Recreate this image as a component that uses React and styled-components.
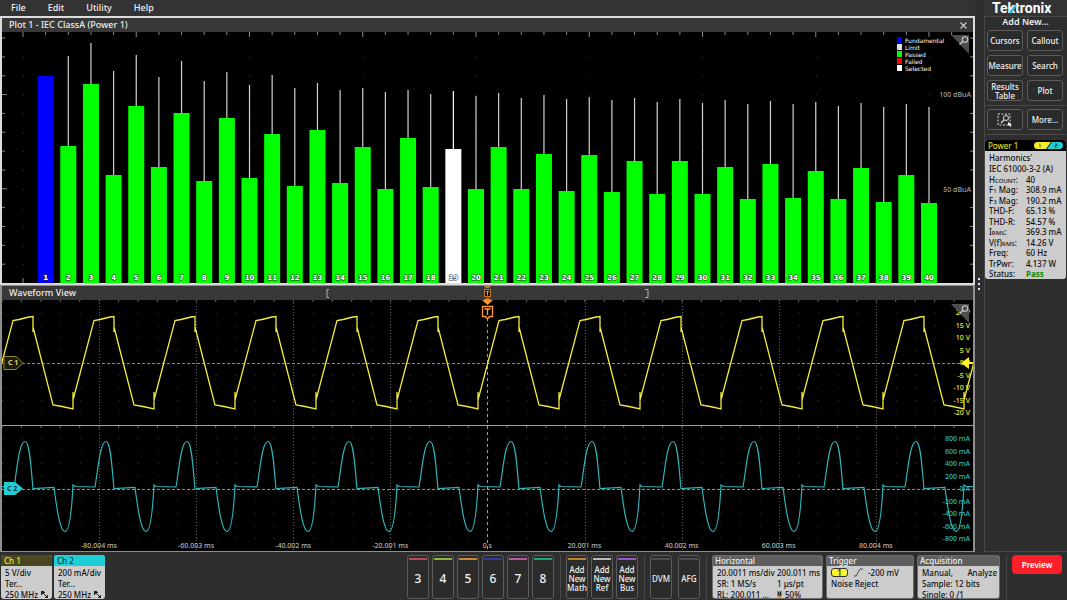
import styled, { createGlobalStyle } from 'styled-components';

const GlobalStyle = createGlobalStyle`
  * {
    box-sizing: border-box;
  }
  body {
    margin: 0;
    background: #2e2e2e;
    color: #eeeeee;
    font-family: 'Noto Sans', 'Open Sans', sans-serif;
    font-size: 9px;
  }
  button {
    font-family: inherit;
    padding: 0;
    cursor: pointer;
  }
`;

const Screen = styled.div`
  display: grid;
  grid-template-columns: minmax(0, 1fr) 92px;
  min-height: 100vh;
  grid-template-rows: 1fr auto;
`;

const Workspace = styled.main`
  display: flex;
  flex-direction: column;
  min-width: 0;
`;

const MenuBar = styled.nav`
  display: flex;
  height: 16px;
  padding-left: 5px;
  background: #333333;
`;

const MenuButton = styled.button`
  border: none;
  background: none;
  color: #f2f2f2;
  font-size: 9px;
  font-weight: 500;
  line-height: 16px;
  padding: 0 6px;
  margin-right: 10px;
`;

const View = styled.section`
  border-style: solid;
  border-width: ${(p) => (p.$active ? '2px' : '1px 2px')};
  border-color: ${(p) => (p.$active ? '#dcdcdc' : '#8f8f8f')};
  background: #000000;
`;

const ViewHeader = styled.header`
  display: flex;
  position: relative;
  justify-content: space-between;
  align-items: center;
  height: 14px;
  padding: 0 5px 0 7px;
  background: #383838;
`;

const ViewTitle = styled.h2`
  margin: 0;
  font-size: 9px;
  font-weight: 500;
  line-height: 14px;
`;

const CloseButton = styled.button`
  display: flex;
  border: none;
  background: none;
  color: #d0d0d0;
`;

const RangeMarks = styled.svg`
  position: absolute;
  left: 0;
  top: 0;
  width: 100%;
  height: 14px;
  overflow: visible;
`;

const Chart = styled.svg`
  display: block;
  width: 100%;
  height: auto;
`;

const ChartText = styled.text`
  font-family: 'Noto Sans', sans-serif;
  font-size: 7px;
  font-weight: ${(p) => (p.$strong ? 700 : 500)};
  fill: ${(p) => p.$color || '#b8b8b8'};
`;

const BarLabel = styled.text`
  font-family: 'DejaVu Sans', sans-serif;
  font-size: 7px;
  font-weight: 700;
  fill: #ffffff;
  text-anchor: middle;
  paint-order: stroke;
  stroke: #333333;
  stroke-width: 1px;
`;

const LegendText = styled.text`
  font-family: 'DejaVu Sans', sans-serif;
  font-size: 6px;
  fill: #ffffff;
`;

const SideBar = styled.aside`
  display: flex;
  min-width: 0;
`;

const Grip = styled.div`
  display: flex;
  flex-direction: column;
  width: 9px;
  padding: 278px 0 0 3px;
  gap: 3px;
`;

const GripDot = styled.span`
  width: 2px;
  height: 2px;
  background: #e8e8e8;
`;

const SideContent = styled.div`
  display: flex;
  flex-direction: column;
  flex: 1;
  min-width: 0;
`;

const Logo = styled.div`
  height: 16px;
  padding-left: 8px;
  background: #333333;
`;

const LogoDrawing = styled.svg`
  display: block;
`;

const LogoText = styled.text`
  font-family: Roboto, sans-serif;
  font-size: 14px;
  font-weight: 700;
  fill: #ffffff;
`;

const SidePanel = styled.div`
  flex: 1;
  border: 1px solid #484848;
  border-right: none;
  padding-right: 1px;
`;

const SideTitle = styled.h2`
  margin: 0;
  font-size: 9px;
  font-weight: 600;
  line-height: 9px;
  text-align: center;
`;

const ButtonGrid = styled.div`
  display: grid;
  grid-template-columns: 1fr 1fr;
  gap: 4px;
  padding: ${(p) => (p.$tools ? '3px 3px 4px 2px' : '4px 3px 4px 2px')};
  border-bottom: 1px solid #484848;
`;

const SideButton = styled.button`
  display: flex;
  align-items: center;
  justify-content: center;
  height: 21px;
  border: 1px solid #5c5c5c;
  border-radius: 3px;
  background: #2b2b2b;
  color: #f2f2f2;
  font-size: 8px;
  font-weight: 500;
  line-height: 9px;
`;

const Badge = styled.article`
  margin-top: 5px;
  border-radius: 3px;
  overflow: hidden;
  background: #cccccc;
  color: #111111;
`;

const BadgeHeader = styled.header`
  display: flex;
  align-items: center;
  justify-content: space-between;
  height: 11px;
  padding: 0 3px;
  background: #000000;
  color: #f5ee2b;
  font-size: 8px;
`;

const BadgeBody = styled.div`
  display: flex;
  flex-direction: column;
  height: 128px;
  padding: 2px 0 0 4px;
  font-size: 8px;
  font-weight: 500;
  line-height: 10px;
`;

const BadgeLine = styled.p`
  margin: 0 0 1px;
  white-space: nowrap;
`;

const Results = styled.dl`
  display: grid;
  flex: 1;
  align-content: space-between;
  grid-template-columns: 37px 1fr;
  grid-auto-rows: 10px;
  margin: 0;
  white-space: nowrap;
`;

const ResultName = styled.dt`
  margin: 0;
`;

const ResultValue = styled.dd`
  margin: 0;
  ${(p) => p.$pass && 'color: #0c850c; font-weight: 700;'}
`;

const Small = styled.small`
  font-size: 6px;
  line-height: 6px;
`;

const Settings = styled.footer`
  display: flex;
  grid-column: 1 / -1;
  align-items: flex-start;
  height: 48px;
  padding: 3px 5px 0 1px;
  gap: 2px;
`;

const ChannelBadge = styled.article`
  width: 51px;
  height: 44px;
  border-radius: 3px;
  overflow: hidden;
  background: #cccccc;
  color: #111111;
`;

const ChannelHeader = styled.h3`
  margin: 0;
  height: 11px;
  padding-left: 3px;
  background: ${(p) => p.$background};
  color: ${(p) => p.$color};
  font-size: 8px;
  font-weight: 500;
  line-height: 11px;
`;

const SettingLines = styled.div`
  padding: 1px 2px 0 4px;
  font-size: 8px;
  font-weight: 500;
  line-height: 11px;
  white-space: nowrap;
`;

const SettingRow = styled.div`
  display: flex;
  align-items: center;
  height: 11px;
  gap: 3px;
  justify-content: ${(p) => (p.$spread ? 'space-between' : 'flex-start')};
`;

const SettingCell = styled.span`
  width: 57px;
`;

const Spacer = styled.div`
  flex: 1;
`;

const KeyGroup = styled.div`
  display: flex;
  gap: ${(p) => (p.$wide ? '6px' : '3px')};
  padding-right: 6px;
  margin-right: 3px;
  border-right: 1px solid #484848;
`;

const KeyButton = styled.button`
  width: 22px;
  height: 44px;
  border: 1px solid #5c5c5c;
  border-radius: 3px;
  background: #2b2b2b;
  color: #f2f2f2;
  font-size: ${(p) => (p.$large ? '12px' : '8px')};
  font-weight: 500;
  line-height: 9px;
  white-space: nowrap;
  display: flex;
  flex-direction: column;
  align-items: center;
`;

const KeyStripe = styled.span`
  flex: none;
  width: 18px;
  height: 2px;
  margin-top: 2px;
  background: ${(p) => p.$color};
`;

const KeyText = styled.span`
  display: flex;
  flex: 1;
  align-items: center;
  padding-bottom: 2px;
`;

const InfoBadge = styled.article`
  width: ${(p) => p.$width};
  height: 44px;
  margin-right: 1px;
  border: 1px solid #6b6b6b;
  border-radius: 3px;
  overflow: hidden;
  background: #cccccc;
  color: #111111;
`;

const InfoHeader = styled.h3`
  margin: 0;
  height: 10px;
  padding-left: 2px;
  background: #5f5f5f;
  color: #f2f2f2;
  font-size: 8px;
  font-weight: 500;
  line-height: 10px;
`;

const SourceTag = styled.span`
  width: 17px;
  height: 9px;
  border: 1px solid #333333;
  border-radius: 3px;
  background: #fdf22e;
  text-align: center;
  line-height: 7px;
`;

const PreviewArea = styled.div`
  height: 44px;
  margin-left: 3px;
  padding-left: 5px;
  border-left: 1px solid #484848;
`;

const Preview = styled.button`
  width: 50px;
  height: 19px;
  border: none;
  border-radius: 4px;
  background: #fb1f29;
  color: #ffffff;
  font-size: 8px;
  font-weight: 600;
`;

// heights above the baseline: [level, limit], harmonic 1 has no limit
const HARMONICS = [
  [207, 0], [137, 227], [199, 240], [108, 212], [177, 228], [116, 206], [170, 222], [102, 202],
  [165, 211], [105, 198], [149, 208], [97, 195], [153, 200], [100, 193], [136, 195], [94, 191],
  [145, 193], [96, 189], [134, 192], [94, 187], [136, 190], [94, 185], [129, 188], [92, 184],
  [128, 186], [91, 183], [122, 185], [89, 181], [122, 184], [89, 180], [116, 183], [84, 179],
  [119, 182], [85, 179], [112, 181], [84, 177], [115, 180], [81, 176], [108, 179], [80, 176],
];

const LEGEND = [
  ['Fundamental', '#0000ff'],
  ['Limit', '#e0e0e0'],
  ['Passed', '#00ff00'],
  ['Failed', '#ff0000'],
  ['Selected', '#ffffff'],
];

const range = (n) => Array.from({ length: n }, (_, i) => i);

const STEP = 22.65;
const barX = (n) => 21 + n * STEP;

const barColor = (n) => {
  if (n === 1) return '#0000ff';
  if (n === 19) return '#ffffff';
  return '#00ff00';
};

const ZoomCorner = ({ y }) => (
  <g transform={`translate(949 ${y})`}>
    <path d="M0 0H18V19Z" fill="#4d4d4d" />
    <circle cx="14" cy="4.5" r="2.8" fill="none" stroke="#c8c8c8" strokeWidth="1.1" />
    <path d="M12 6.5L8.5 9.5" stroke="#c8c8c8" strokeWidth="1.6" />
  </g>
);

const HarmonicsChart = () => (
  <Chart viewBox="0 0 971 251" role="img" aria-label="Harmonics bar chart">
    {range(42).map((i) => (
      <path
        key={i}
        d={`M${barX(i)} 0v${i % 5 === 0 ? 5 : 3}${i % 5 === 0 ? 'M' + barX(i) + ' 246v5' : ''}`}
        stroke="#8a8a8a"
      />
    ))}
    {range(13).map((i) => {
      const y = 251 - (i + 1) * 18.84;
      const major = (i + 1) % 5 === 0;
      return <path key={i} d={major ? `M0 ${y}h5` : `M0 ${y}h3M971 ${y}h-3`} stroke="#8a8a8a" />;
    })}
    {range(9).map((i) =>
      range(12).map((j) => (
        <rect key={`${i}-${j}`} x={barX(i * 5)} y={251 - (j + 1) * 18.84} width="1" height="1" fill="#3a3a3a" />
      ))
    )}
    {HARMONICS.map(([level, limit], i) => {
      const n = i + 1;
      return (
        <g key={n}>
          {limit > 0 && (
            <rect
              x={barX(n) - 0.6}
              y={251 - limit}
              width="1.2"
              height={limit - level}
              fill={n === 19 ? '#ffffff' : '#d0d0d0'}
            />
          )}
          <rect x={barX(n) - 8} y={251 - level} width="16" height={level} fill={barColor(n)} />
          <BarLabel x={barX(n)} y="248">
            {n}
          </BarLabel>
        </g>
      );
    })}
    {LEGEND.map(([name, color], i) => (
      <g key={name}>
        <rect x="895" y={5 + i * 7} width="5" height="6" fill={color} />
        <LegendText x="903" y={11 + i * 7}>
          {name}
        </LegendText>
      </g>
    ))}
    <ZoomCorner y={3} />
    <ChartText x="969" y="65" textAnchor="end" $color="#a0a0a0">
      100 dBuA
    </ChartText>
    <ChartText x="969" y="160" textAnchor="end" $color="#a0a0a0">
      50 dBuA
    </ChartText>
  </Chart>
);

const PERIOD = 81;

const voltagePath = range(13)
  .map((k) => {
    const x = 31 + (k - 1) * PERIOD;
    return `${k === 0 ? 'M' : 'L'}${x - 20} 20.5 l6 -1 l10 -2.5 l4 -0.5 V32 V27 L${x + 20} 105 l9 1.5 l11 2.5 V92 V100 L${x + 61} 20.5`;
  })
  .join(' ');

const currentPath = range(13)
  .map((k) => {
    const x = 31 + (k - 1) * PERIOD;
    return `${k === 0 ? 'M' : 'L'}${x - 19} 187 C${x - 16} 170 ${x - 14} 141.5 ${x - 8} 141.5 C${x - 3} 141.5 ${x - 2} 170 ${x} 188.5 L${x + 21} 187.5 C${x + 24} 210 ${x + 27} 231.5 ${x + 32} 231.5 C${x + 37} 231.5 ${x + 39} 205 ${x + 40} 185 l2 1.5 L${x + 62} 187`;
  })
  .join(' ');

const TIMES = ['-80.004 ms', '-60.003 ms', '-40.002 ms', '-20.001 ms', '0 s', '20.001 ms', '40.002 ms', '60.003 ms', '80.004 ms'];
const VOLTS = ['20 V', '15 V', '10 V', '5 V', '0 V', '-5 V', '-10 V', '-15 V', '-20 V'];
const AMPS = ['800 mA', '600 mA', '400 mA', '200 mA', '0 A', '-200 mA', '-400 mA', '-600 mA', '-800 mA'];

const WaveformChart = () => (
  <Chart viewBox="0 0 971 251" role="img" aria-label="Channel 1 and channel 2 waveforms">
    {range(50).map((i) =>
      range(9).map((j) => (
        <path
          key={`${i}-${j}`}
          d={`M${i * 19.43} ${13 + j * 12.5}h1M${i * 19.43} ${138.5 + j * 12.5}h1`}
          stroke="#3a3a3a"
        />
      ))
    )}
    {range(50).map((i) => (
      <path key={i} d={`M${i * 19.43} 0v2M${i * 19.43} 126v2`} stroke="#6e6e6e" />
    ))}
    {TIMES.map((time, i) => (
      <path
        key={time}
        d={`M${Math.round(97 + i * 97.1)}.5 0V251`}
        stroke={i === 4 ? '#a0a0a0' : '#5c5c5c'}
        strokeDasharray={i === 4 ? '3 3' : '1 2'}
      />
    ))}
    <path d="M0 63.5H971M0 189.5H971" stroke="#8a8a8a" strokeDasharray="3 2" />
    <path d="M0 125.5H971" stroke="#a0a0a0" />
    {VOLTS.map((label, i) => (
      <ChartText key={label} x="968" y={15 + i * 12.5} textAnchor="end" $color="#f4ec39">
        {label}
      </ChartText>
    ))}
    {AMPS.map((label, i) => (
      <ChartText key={label} x="968" y={141 + i * 12.5} textAnchor="end" $color="#2dbcc2">
        {label}
      </ChartText>
    ))}
    {TIMES.map((time, i) => (
      <ChartText key={time} x={97 + i * 97.1} y="248" textAnchor="middle">
        {time}
      </ChartText>
    ))}
    <path d={voltagePath} fill="none" stroke="#f4ec39" strokeWidth="1.3" />
    <path d={currentPath} fill="none" stroke="#2fb4ba" strokeWidth="1.2" />
    <path d="M2 56.5H14L21 63L14 69.5H2Z" fill="#1d1b06" stroke="#8d8630" />
    <ChartText x="6" y="65" $strong $color="#d9d27a">
      C 1
    </ChartText>
    <path d="M2 182H13L21 188.5L13 195H2Z" fill="#1fcfd6" />
    <ChartText x="5" y="191" $strong $color="#08363a">
      C 2
    </ChartText>
    <path d="M959 63L967 57V62H971V64H967V69Z" fill="#fdf22e" />
    <path d="M480 0H491L485.5 5Z" fill="#ff9b30" />
    <path d="M480.5 6.5H490.5V16.5H487.5L485.5 19L483.5 16.5H480.5Z" fill="#000000" stroke="#ff9b30" strokeWidth="1.3" />
    <path d="M482.5 9H488.5M485.5 9V15" stroke="#ff9b30" strokeWidth="1.3" />
    <ZoomCorner y={4} />
  </Chart>
);

const TEXT_BUTTONS = ['Cursors', 'Callout', 'Measure', 'Search', 'Results Table', 'Plot'];

const RESULTS = [
  [<>H<Small>COUNT</Small>:</>, '40'],
  [<>F<Small>1</Small> Mag:</>, '308.9 mA'],
  [<>F<Small>3</Small> Mag:</>, '190.2 mA'],
  ['THD-F:', '65.13 %'],
  ['THD-R:', '54.57 %'],
  [<>I<Small>RMS</Small>:</>, '369.3 mA'],
  [<>V(f)<Small>RMS</Small>:</>, '14.26 V'],
  ['Freq:', '60 Hz'],
  ['TrPwr:', '4.137 W'],
  ['Status:', 'Pass'],
];

const CHANNEL_KEYS = [
  ['3', '#b8475f'],
  ['4', '#8db53b'],
  ['5', '#d08a3a'],
  ['6', '#353a9e'],
  ['7', '#b957a0'],
  ['8', '#1fa872'],
];

const NEW_KEYS = [
  ['Math', '#c07d2a'],
  ['Ref', '#b8b8b8'],
  ['Bus', '#9a58c4'],
];

// bandwidth limit mark
const BandwidthIcon = () => (
  <svg width="8" height="8" viewBox="0 0 8 8" aria-hidden="true">
    <path d="M0 0h3v1h1v1h-1v1h1v1h-1v-1h-2v1h-1zM4 4h1v1h1v-1h1v3h-3v-1h1v-1h-1z" fill="#222222" />
  </svg>
);

const App = () => (
  <>
    <GlobalStyle />
    <Screen>
      <Workspace>
        <MenuBar>
          {['File', 'Edit', 'Utility', 'Help'].map((name) => (
            <MenuButton key={name}>{name}</MenuButton>
          ))}
        </MenuBar>

        <View $active>
          <ViewHeader>
            <ViewTitle>Plot 1 - IEC ClassA (Power 1)</ViewTitle>
            <CloseButton aria-label="Close plot">
              <svg width="9" height="9" viewBox="0 0 9 9">
                <path d="M1.5 1.5L7.5 7.5M7.5 1.5L1.5 7.5" stroke="currentColor" strokeWidth="1.1" />
              </svg>
            </CloseButton>
          </ViewHeader>
          <HarmonicsChart />
        </View>

        <View>
          <ViewHeader>
            <ViewTitle>Waveform View</ViewTitle>
            <RangeMarks viewBox="0 0 971 14" preserveAspectRatio="none" aria-hidden="true">
              <path d="M327 3.5h-2v8h2M643 3.5h3v8h-3" fill="none" stroke="#b4b4b4" />
              <path d="M482 0h7l-2 2h-3zM482 14h7l-2 -2h-3z" fill="#c9772a" />
              <rect x="482.5" y="3.5" width="6" height="7" fill="#1c1206" stroke="#c9772a" />
              <path d="M484 5.5h3M485.5 5.5v4" stroke="#ff9b30" />
            </RangeMarks>
          </ViewHeader>
          <WaveformChart />
        </View>
      </Workspace>

      <SideBar>
        <Grip>
          <GripDot />
          <GripDot />
          <GripDot />
        </Grip>
        <SideContent>
          <Logo>
            <LogoDrawing width="70" height="16" viewBox="0 0 70 16">
              <LogoText x="0" y="13">
                Tektronix
              </LogoText>
              <path d="M18 13L24 5" stroke="#27c3d9" strokeWidth="2.2" />
            </LogoDrawing>
          </Logo>
          <SidePanel>
            <SideTitle>Add New...</SideTitle>
            <ButtonGrid>
              {TEXT_BUTTONS.map((name) => (
                <SideButton key={name}>{name}</SideButton>
              ))}
            </ButtonGrid>
            <ButtonGrid $tools>
              <SideButton aria-label="Zoom box">
                <svg width="16" height="14" viewBox="0 0 16 14">
                  <rect x="1" y="1" width="12" height="11" fill="none" stroke="#d8d8d8" strokeDasharray="2 1.5" />
                  <circle cx="9" cy="5" r="2.5" fill="none" stroke="#d8d8d8" />
                  <path d="M7.2 6.8L4 10" stroke="#d8d8d8" strokeWidth="1.3" />
                  <path d="M11 9v4l1.2 -1l1.3 2l1 -0.7l-1.2 -1.8h1.7z" fill="#ffffff" />
                </svg>
              </SideButton>
              <SideButton>More...</SideButton>
            </ButtonGrid>
            <Badge>
              <BadgeHeader>
                Power 1
                <svg width="29" height="7" viewBox="0 0 29 7" aria-hidden="true">
                  <path d="M3.5 0H17L12 7H3.5A3.5 3.5 0 0 1 3.5 0Z" fill="#f5ee2b" />
                  <path d="M18 0H25.5A3.5 3.5 0 0 1 25.5 7H13Z" fill="#1fcfd6" />
                  <path d="M6 1.5v4M21 2h2v1.5h-2v2h2" fill="none" stroke="#333333" strokeWidth="0.8" />
                </svg>
              </BadgeHeader>
              <BadgeBody>
                <BadgeLine>Harmonics'</BadgeLine>
                <BadgeLine>IEC 61000-3-2 (A)</BadgeLine>
                <Results>
                  {RESULTS.map(([name, value], i) => [
                    <ResultName key={`name-${i}`}>{name}</ResultName>,
                    <ResultValue key={`value-${i}`} $pass={value === 'Pass'}>
                      {value}
                    </ResultValue>,
                  ])}
                </Results>
              </BadgeBody>
            </Badge>
          </SidePanel>
        </SideContent>
      </SideBar>

      <Settings>
        <ChannelBadge>
          <ChannelHeader $background="#4b4720" $color="#f5ee2b">
            Ch 1
          </ChannelHeader>
          <SettingLines>
            <SettingRow>5 V/div</SettingRow>
            <SettingRow>Ter...</SettingRow>
            <SettingRow>
              250 MHz <BandwidthIcon />
            </SettingRow>
          </SettingLines>
        </ChannelBadge>
        <ChannelBadge>
          <ChannelHeader $background="#1fcfd6" $color="#0b2f33">
            Ch 2
          </ChannelHeader>
          <SettingLines>
            <SettingRow>200 mA/div</SettingRow>
            <SettingRow>Ter...</SettingRow>
            <SettingRow>
              250 MHz <BandwidthIcon />
            </SettingRow>
          </SettingLines>
        </ChannelBadge>
        <Spacer />
        <KeyGroup>
          {CHANNEL_KEYS.map(([name, color]) => (
            <KeyButton key={name} $large>
              <KeyStripe $color={color} />
              <KeyText>{name}</KeyText>
            </KeyButton>
          ))}
        </KeyGroup>
        <KeyGroup>
          {NEW_KEYS.map(([name, color]) => (
            <KeyButton key={name}>
              <KeyStripe $color={color} />
              <KeyText>
                Add
                <br />
                New
                <br />
                {name}
              </KeyText>
            </KeyButton>
          ))}
        </KeyGroup>
        <KeyGroup $wide>
          {['DVM', 'AFG'].map((name) => (
            <KeyButton key={name}>
              <KeyStripe $color="#4d4d4d" />
              <KeyText>{name}</KeyText>
            </KeyButton>
          ))}
        </KeyGroup>
        <InfoBadge $width="111px">
          <InfoHeader>Horizontal</InfoHeader>
          <SettingLines>
            <SettingRow>
              <SettingCell>20.0011 ms/div</SettingCell>200.011 ms
            </SettingRow>
            <SettingRow>
              <SettingCell>SR: 1 MS/s</SettingCell>1 µs/pt
            </SettingRow>
            <SettingRow>
              <SettingCell>RL: 200.011 ...</SettingCell>
              <svg width="5" height="7" viewBox="0 0 5 7" aria-hidden="true">
                <path d="M0 0H5V5L2.5 7L0 5Z" fill="#c9772a" />
                <path d="M1.5 1V4H3.5V1" fill="none" stroke="#222222" />
              </svg>
              50%
            </SettingRow>
          </SettingLines>
        </InfoBadge>
        <InfoBadge $width="88px">
          <InfoHeader>Trigger</InfoHeader>
          <SettingLines>
            <SettingRow>
              <SourceTag>1</SourceTag>
              <svg width="14" height="9" viewBox="0 0 14 9" aria-hidden="true">
                <path d="M3 8H5L9 1H12" fill="none" stroke="#444444" />
              </svg>
              -200 mV
            </SettingRow>
            <SettingRow>Noise Reject</SettingRow>
          </SettingLines>
        </InfoBadge>
        <InfoBadge $width="83px">
          <InfoHeader>Acquisition</InfoHeader>
          <SettingLines>
            <SettingRow $spread>
              <span>Manual,</span>
              <span>Analyze</span>
            </SettingRow>
            <SettingRow>Sample: 12 bits</SettingRow>
            <SettingRow>Single: 0 /1</SettingRow>
          </SettingLines>
        </InfoBadge>
        <PreviewArea>
          <Preview>Preview</Preview>
        </PreviewArea>
      </Settings>
    </Screen>
  </>
);

export default App;
